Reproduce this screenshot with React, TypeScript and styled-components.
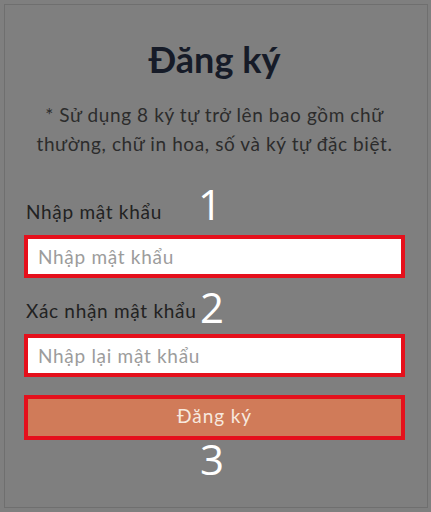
import React from "react";
import styled, { createGlobalStyle } from "styled-components";

const GlobalStyle = createGlobalStyle`
  * { box-sizing: border-box; }
  html, body { margin: 0; padding: 0; background: #7f7f7f; }
  body { font-family: Lato, "Noto Sans", "DejaVu Sans", sans-serif; }
`;

const Page = styled.div`
  width: 431px;
  height: 512px;
  padding: 4px 3px 4px 4px;
`;

const Frame = styled.div`
  position: relative;
  height: 100%;
  border: 1px solid #6f6f6f;
  padding: 34px 22px 0 19px;
  display: flex;
  flex-direction: column;
`;

const Title = styled.h1`
  margin: 0;
  font-family: Lato, sans-serif;
  font-weight: 700;
  font-size: 36px;
  line-height: 40px;
  color: #161b28;
  text-align: center;
`;

const Hint = styled.p`
  margin: 21px 0 0;
  font-family: Lato, sans-serif;
  font-size: 19px;
  letter-spacing: 0.6px;
  line-height: 29px;
  color: #2c2c2c;
  text-align: center;
`;

const Label = styled.label<{ $gap: number }>`
  display: block;
  margin: ${(p) => p.$gap}px 0 0 2px;
  font-family: Lato, sans-serif;
  font-size: 19px;
  letter-spacing: 0.7px;
  line-height: 22px;
  color: #222222;
`;

const Input = styled.input`
  display: block;
  width: 100%;
  height: 43px;
  margin-top: 12px;
  border: 4px solid #e5101c;
  background: #ffffff;
  padding: 0 10px;
  font-family: Lato, sans-serif;
  font-size: 19px;
  letter-spacing: 0.7px;
  color: #333;
  outline: none;
  &::placeholder { color: #9c9c9c; }
`;

const Submit = styled.button`
  display: block;
  width: 100%;
  height: 45px;
  margin-top: 18px;
  border: 4px solid #e5101c;
  background: #d07b59;
  color: #f7e8de;
  font-family: Lato, sans-serif;
  font-size: 19px;
  letter-spacing: 0.9px;
  padding: 0 0 4px;
  cursor: pointer;
`;

const Marker = styled.span<{ $top: number; $left: number }>`
  position: absolute;
  top: ${(p) => p.$top}px;
  left: ${(p) => p.$left}px;
  width: 40px;
  text-align: center;
  font-family: "Open Sans", sans-serif;
  font-size: 42px;
  line-height: 42px;
  color: #ffffff;
`;

export default function App() {
  return (
    <>
      <GlobalStyle />
      <Page>
        <Frame>
          <Title>Đăng ký</Title>
          <Hint>
            * Sử dụng 8 ký tự trở lên bao gồm chữ
            <br />
            thường, chữ in hoa, số và ký tự đặc biệt.
          </Hint>
          <Label $gap={43}>Nhập mật khẩu</Label>
          <Input type="password" placeholder="Nhập mật khẩu" />
          <Label $gap={22}>Xác nhận mật khẩu</Label>
          <Input type="password" placeholder="Nhập lại mật khẩu" />
          <Submit type="button">Đăng ký</Submit>
          <Marker $top={178} $left={185}>1</Marker>
          <Marker $top={281} $left={187}>2</Marker>
          <Marker $top={433} $left={187}>3</Marker>
        </Frame>
      </Page>
    </>
  );
}
